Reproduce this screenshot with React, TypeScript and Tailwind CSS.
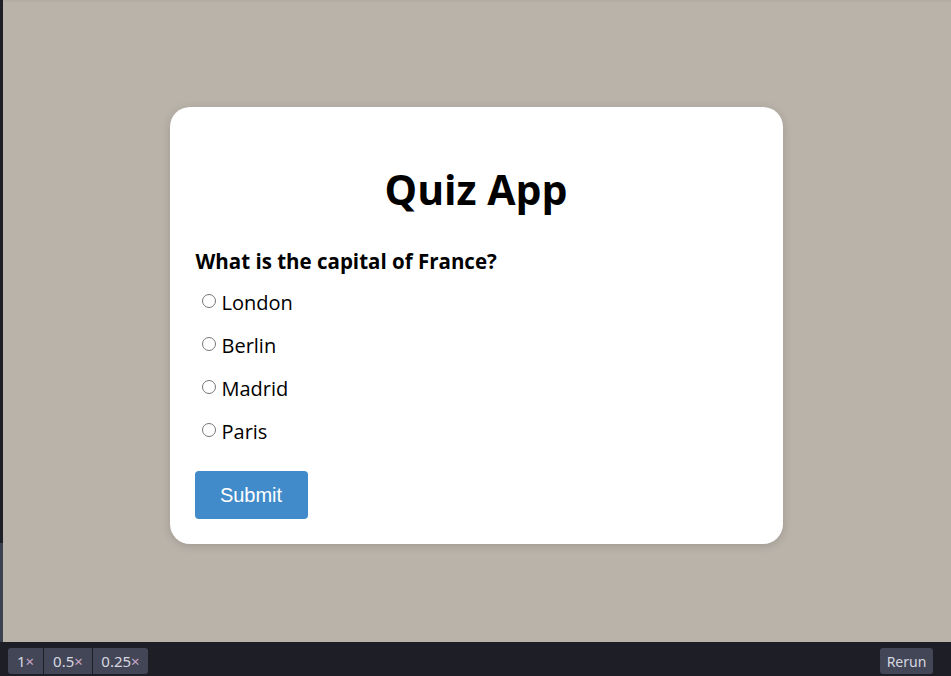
import React from "react";

export default function App() {
  const options = ["London", "Berlin", "Madrid", "Paris"];
  return (
    <div className="w-[951px] h-[676px] flex flex-col bg-[#1e1f26] overflow-hidden">
      <div className="flex flex-1 min-h-0">
        <div className="w-[3px] flex flex-col">
          <div className="h-[543px] bg-[#1e1f26]" />
          <div className="flex-1 bg-[#3c4150]" />
        </div>
        <div className="flex-1 flex flex-col bg-[#bab3aa] border-t-2 border-[#b3ada4]">
          <div className="flex-1 flex items-center justify-center">
            <div
              className="w-[613px] h-[437px] bg-white rounded-[20px] shadow-[0_2px_10px_rgba(0,0,0,0.15)] px-[25px] pt-[54px] mt-[7px] mr-[2px]"
              style={{ fontFamily: "'Open Sans', 'Noto Sans', sans-serif" }}
            >
              <h1 className="text-center text-[41px] leading-[56px] font-bold text-black">Quiz App</h1>
              <p className="mt-[30px] ml-[1px] text-[20.5px] leading-[28px] font-bold text-black">What is the capital of France?</p>
              <div className="mt-[6px] flex flex-col">
                {options.map((o) => (
                  <label key={o} className="flex items-center h-[43px] pl-[7px] text-[20px] text-black">
                    <span className="w-[14px] h-[14px] rounded-full border border-[#767676] bg-white mr-[6px] mt-[-3px]" />
                    {o}
                  </label>
                ))}
              </div>
              <button
                className="mt-[18px] w-[113px] h-[48px] rounded-[4px] bg-[#428bca] text-white text-[20px]"
                style={{ fontFamily: "'Liberation Sans', Arial, sans-serif" }}
              >
                Submit
              </button>
            </div>
          </div>
        </div>
      </div>
      <div
        className="h-[34px] flex items-center justify-between pl-[8px] pr-[18px] bg-[#1e1f26] text-[15px] text-[#d6d8e0]"
        style={{ fontFamily: "'Noto Sans', sans-serif" }}
      >
        <div className="flex gap-[1px] mt-[4px]">
          <span className="h-[26px] w-[35px] justify-center flex items-center bg-[#434656] rounded-l-[3px]">1<span className="text-[#c9a9c8]">×</span></span>
          <span className="h-[26px] w-[48px] justify-center flex items-center bg-[#434656]">0.5<span className="text-[#c9a9c8]">×</span></span>
          <span className="h-[26px] w-[55px] justify-center flex items-center bg-[#434656] rounded-r-[3px]">0.25<span className="text-[#c9a9c8]">×</span></span>
        </div>
        <span className="h-[26px] w-[53px] mt-[4px] justify-center flex items-center bg-[#434656] rounded-[3px] text-[14px]">Rerun</span>
      </div>
    </div>
  );
}
